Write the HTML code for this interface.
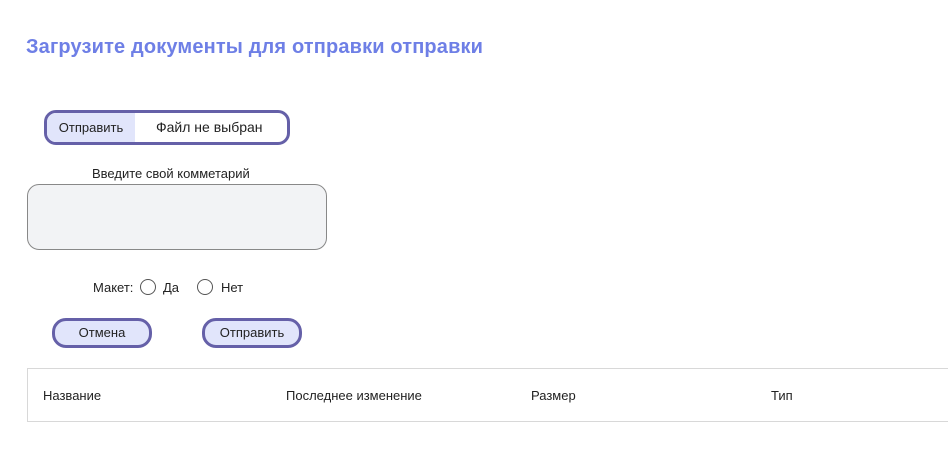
<!DOCTYPE html>
<html><head><meta charset="utf-8"><style>
*{box-sizing:border-box;margin:0;padding:0}
body{width:948px;height:454px;background:#fff;font-family:"Liberation Sans",sans-serif;color:#222;position:relative;overflow:hidden}
.a{position:absolute;white-space:nowrap}
h1{position:absolute;left:26px;top:36px;font-size:20px;font-weight:bold;color:#6e7fe6;letter-spacing:0.15px}
.file{position:absolute;left:44px;top:110px;width:246px;height:35px;border:3px solid #6560a8;border-radius:12px;overflow:hidden;font-size:13px}
.file .b{position:absolute;left:0;top:0;width:88px;height:100%;background:#e1e5fb;line-height:29px;text-align:center}
.file .t{position:absolute;left:109px;top:0;line-height:29px;font-size:14px}
.ta{position:absolute;left:27px;top:184px;width:300px;height:66px;background:#f2f3f5;border:1px solid #888;border-radius:12px}
.r{position:absolute;width:16px;height:16px;border:1.5px solid #555;border-radius:50%}
.btn{position:absolute;top:318px;height:30px;border:3px solid #6560a8;border-radius:14px;background:#e1e5fb;font-size:13px;text-align:center;line-height:24px}
.tbl{position:absolute;left:27px;top:368px;width:930px;height:54px;border:1px solid #d8d8d8}
.th{position:absolute;top:388px;font-size:13px}
</style></head><body>
<h1>Загрузите документы для отправки отправки</h1>
<div class="file"><div class="b">Отправить</div><div class="t">Файл не выбран</div></div>
<div class="a" style="left:92px;top:166px;font-size:13px">Введите свой комметарий</div>
<div class="ta"></div>
<div class="a" style="left:93px;top:280px;font-size:13px">Макет:</div>
<div class="r" style="left:140px;top:279px"></div>
<div class="a" style="left:163px;top:280px;font-size:13px">Да</div>
<div class="r" style="left:197px;top:279px"></div>
<div class="a" style="left:221px;top:280px;font-size:13px">Нет</div>
<div class="btn" style="left:52px;width:100px">Отмена</div>
<div class="btn" style="left:202px;width:100px">Отправить</div>
<div class="tbl"></div>
<div class="th" style="left:43px">Название</div>
<div class="th" style="left:286px">Последнее изменение</div>
<div class="th" style="left:531px">Размер</div>
<div class="th" style="left:771px">Тип</div>
</body></html>
